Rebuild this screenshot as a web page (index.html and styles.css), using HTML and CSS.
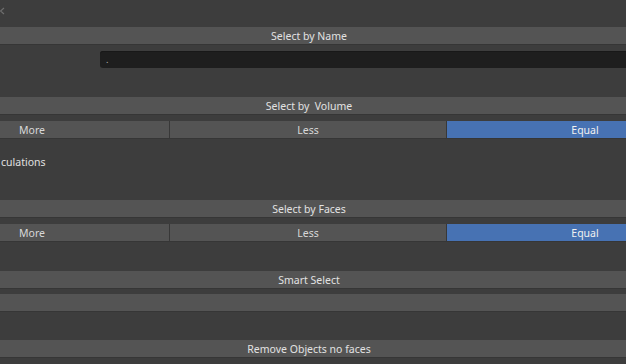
FILE: index.html
```html
<!DOCTYPE html>
<html>
<head>
<meta charset="utf-8">
<link rel="stylesheet" href="styles.css">
</head>
<body>
<div class="page">
  <div class="corner"><svg class="corner-icon" width="7" height="8" viewBox="0 0 7 8"><path d="M5 1 L1.5 4 L5 7" fill="none" stroke="#6e6e6e" stroke-width="1.2"/></svg></div>
  <div class="bar">Select by Name</div>
  <div class="input-row"><div class="input">.</div></div>
  <div class="bar gap-lg">Select by &nbsp;Volume</div>
  <div class="seg">
    <div class="btn">More</div>
    <div class="btn">Less</div>
    <div class="btn active">Equal</div>
  </div>
  <div class="label"><span class="label-text">culations</span></div>
  <div class="bar">Select by Faces</div>
  <div class="seg">
    <div class="btn">More</div>
    <div class="btn">Less</div>
    <div class="btn active">Equal</div>
  </div>
  <div class="bar gap-xl">Smart Select</div>
  <div class="bar gap-sm"></div>
  <div class="bar gap-lg">Remove Objects no faces</div>
</div>
</body>
</html>
```
FILE: styles.css
```css
html, body {
  margin: 0;
  padding: 0;
  background: #3d3d3d;
  overflow: hidden;
  width: 626px;
  height: 364px;
}
.page {
  margin-left: -105px;
  width: 828px;
  display: flex;
  flex-direction: column;
  font-family: "Noto Sans", sans-serif;
  font-size: 10.5px;
  color: #e2e2e2;
}
.corner {
  height: 27px;
  padding-left: 104px;
  display: flex;
  align-items: flex-start;
}
.corner-icon {
  margin-top: 7px;
}
.bar {
  height: 17px;
  box-sizing: border-box;
  padding-top: 1px;
  line-height: 16px;
  background: #545454;
  text-align: center;
  box-shadow: 0 1px 0 #363636;
}
.gap-sm { margin-top: 6px; }
.gap-lg { margin-top: 29px; }
.gap-xl { margin-top: 30px; }
.input-row {
  margin-top: 7px;
  height: 17px;
  padding-left: 205px;
  display: flex;
}
.input {
  flex: 1;
  background: #1e1e1e;
  border-radius: 3px;
  box-shadow: inset 0 1px 0 #181818;
  padding-left: 6px;
  line-height: 17px;
  color: #b8b8b8;
  font-size: 9px;
}
.seg {
  margin-top: 7px;
  height: 17px;
  display: grid;
  grid-template-columns: 274px 276px 276px;
  column-gap: 1px;
  background: #383838;
  box-shadow: 0 1px 0 #363636;
}
.btn {
  background: #545454;
  text-align: center;
  padding-top: 1px;
  line-height: 16px;
  color: #d8d8d8;
}
.btn.active {
  background: #4772b3;
  color: #f0f0f0;
}
.label {
  height: 62px;
  padding-top: 16px;
  box-sizing: border-box;
  line-height: 17px;
}
.label-text {
  margin-left: 106px;
  color: #e0e0e0;
}
```
